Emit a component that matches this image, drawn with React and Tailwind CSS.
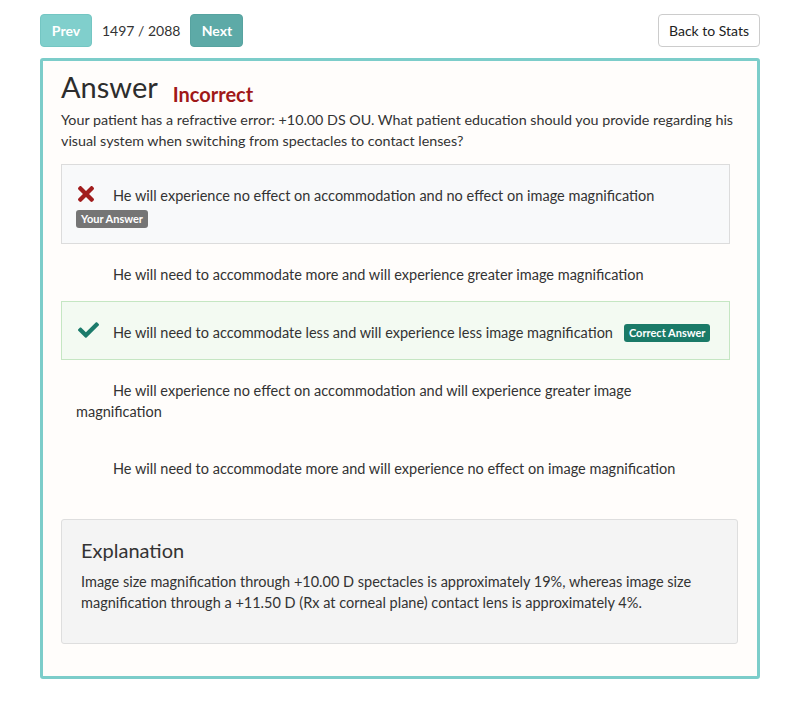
import React from 'react';

const options = [
  { text: 'He will experience no effect on accommodation and no effect on image magnification', status: 'wrong' },
  { text: 'He will need to accommodate more and will experience greater image magnification' },
  { text: 'He will need to accommodate less and will experience less image magnification', status: 'correct' },
  { text: 'He will experience no effect on accommodation and will experience greater image magnification' },
  { text: 'He will need to accommodate more and will experience no effect on image magnification' },
];

const XIcon = () => (
  <svg width="16" height="16" viewBox="0 80 352 352" className="inline-block align-[-1px] ml-[2px]">
    <path
      fill="#a11d1d"
      d="M242.72 256l100.07-100.07c12.28-12.280 12.28-32.19 0-44.48l-22.24-22.24c-12.28-12.28-32.19-12.28-44.48 0L176 189.28 75.93 89.21c-12.28-12.28-32.19-12.28-44.48 0L9.21 111.450c-12.28 12.28-12.28 32.19 0 44.48L109.28 256 9.21 356.07c-12.28 12.28-12.28 32.19 0 44.48l22.24 22.24c12.28 12.28 32.2 12.28 44.48 0L176 322.72l100.07 100.07c12.28 12.28 32.2 12.28 44.48 0l22.24-22.24c12.28-12.28 12.28-32.19 0-44.48L242.72 256z"
    />
  </svg>
);

const CheckIcon = () => (
  <svg width="21" height="16" viewBox="0 64 512 384" className="inline-block align-[0px] ml-[2px]">
    <path
      fill="#1b7b6b"
      d="M173.898 439.404l-166.4-166.4c-9.997-9.997-9.997-26.206 0-36.204l36.203-36.204c9.997-9.998 26.207-9.998 36.204 0L192 312.69 432.095 72.596c9.997-9.997 26.207-9.997 36.204 0l36.203 36.204c9.997 9.997 9.997 26.206 0 36.204l-294.4 294.401c-9.998 9.997-26.207 9.997-36.204-.001z"
    />
  </svg>
);

const Option = ({ text, status }) => {
  // only the picked and the right answer get a box
  let box = 'pl-[15px] pb-[16px]';
  if (status === 'wrong') box = 'border pl-[14px] bg-[#f8f9fa] border-[#dcdcdc] pb-[15px]';
  if (status === 'correct') box = 'border pl-[14px] bg-[#f3faf2] border-[#c5e6c3] pb-[16px]';

  return (
    <div className={`mr-[8px] pr-4 pt-[20px] ${box}`}>
      <div className="leading-[21px]">
        <span className="inline-block w-[37px]">
          {status === 'wrong' && <XIcon />}
          {status === 'correct' && <CheckIcon />}
        </span>
        {text}
        {status === 'correct' && (
          <span className="ml-[11px] inline-block rounded-[3px] bg-[#1a7a68] px-[5px] text-[11px] font-bold leading-[18px] text-white align-[1px]">
            Correct Answer
          </span>
        )}
      </div>
      {status === 'wrong' && (
        <div className="mt-[4px] leading-none">
          <span className="inline-block rounded-[3px] bg-[#757575] px-[5px] text-[11px] font-bold leading-[18px] text-white">
            Your Answer
          </span>
        </div>
      )}
    </div>
  );
};

export default function App() {
  return (
    <div className="min-h-[702px] bg-white px-[40px] pt-[14px] text-[14.5px] text-[#333] font-['Lato',sans-serif]">
      {/* top bar */}
      <div className="flex items-center">
        <button className="h-[33px] w-[52px] rounded-[4px] border border-[#74c6c3] bg-[#80cfcc] text-[14px] font-bold text-white">
          Prev
        </button>
        <span className="mx-[10px] text-[14px] text-[#333]">1497 / 2088</span>
        <button className="h-[33px] w-[53px] rounded-[4px] border border-[#57a3a0] bg-[#5daaa7] text-[14px] font-bold text-white">
          Next
        </button>
        <button className="ml-auto h-[33px] w-[102px] rounded-[4px] border border-[#cccccc] bg-white text-[14px] text-[#222]">
          Back to Stats
        </button>
      </div>

      {/* panel */}
      <div className="mt-[11px] rounded-[3px] border-[3px] border-[#7ccdca] bg-[#fffdfb] pl-[18px] pr-[19px] pt-[8px] pb-[32px]">
        <div className="flex items-end">
          <h2 className="text-[29px] leading-[36px] text-[#2d2d2d]">Answer</h2>
          <span className="ml-[15px] mb-[-3px] text-[20px] font-bold leading-[28px] text-[#a01818]">Incorrect</span>
        </div>
        <p className="mt-[4px] text-[14.3px] leading-[21px]">
          Your patient has a refractive error: +10.00 DS OU. What patient education should you provide regarding his
          visual system when switching from spectacles to contact lenses?
        </p>

        <div className="mt-[13px]">
          {options.map((o, i) => (
            <Option key={i} text={o.text} status={o.status} />
          ))}
        </div>

        <div className="mt-[24px] rounded-[3px] border border-[#dedede] bg-[#f4f4f4] px-[19px] pt-[16px] pb-[30px]">
          <h3 className="text-[20px] leading-[28px] text-[#333]">Explanation</h3>
          <p className="mt-[7px] leading-[21px]">
            Image size magnification through +10.00 D spectacles is approximately 19%, whereas image size
            magnification through a +11.50 D (Rx at corneal plane) contact lens is approximately 4%.
          </p>
        </div>
      </div>
    </div>
  );
}
